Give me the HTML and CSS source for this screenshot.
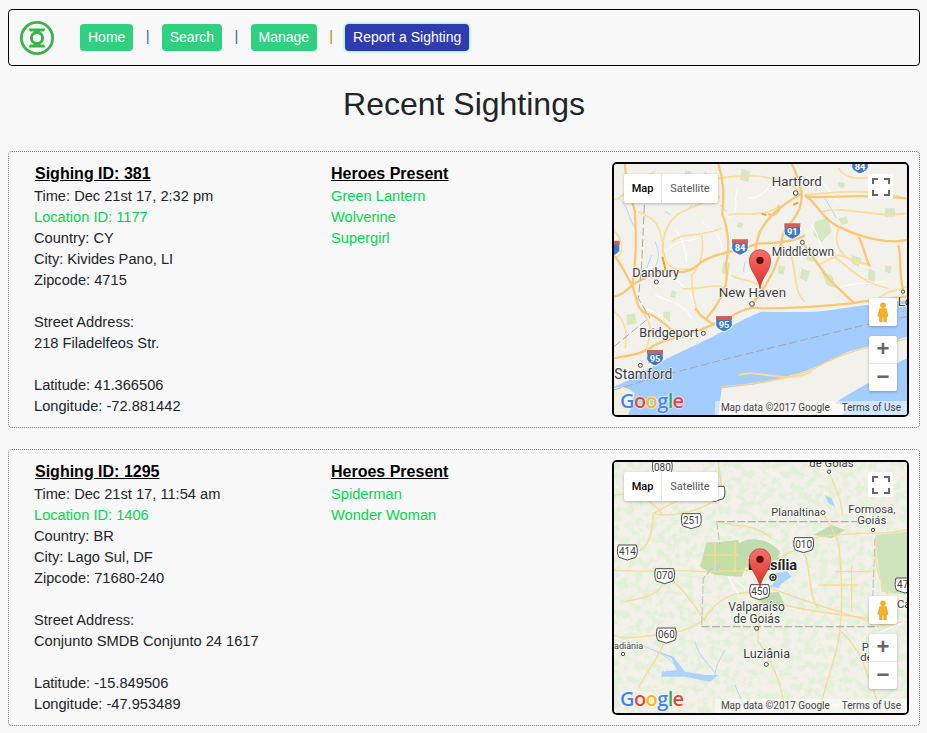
FILE: index.html
```html
<!DOCTYPE html>
<html lang="en">
<head>
<meta charset="utf-8">
<title>Recent Sightings</title>
<link rel="stylesheet" href="styles.css">
</head>
<body>
<svg class="defs" width="0" height="0" aria-hidden="true">
  <defs>
    <filter id="mottle" x="0" y="0" width="100%" height="100%">
      <feTurbulence type="fractalNoise" baseFrequency="0.045" numOctaves="4" seed="11"/>
      <feColorMatrix type="matrix" values="0 0 0 0 0.77  0 0 0 0 0.88  0 0 0 0 0.70  7 0 0 0 -3.300"/>
    </filter>
    <linearGradient id="pinFill" x1="0" y1="0" x2="0" y2="1">
      <stop offset="0" stop-color="#f8716a"/>
      <stop offset="1" stop-color="#d62f28"/>
    </linearGradient>
    <g id="pin">
      <path d="M0 0C-4-34-32-52-32-85a32 32 0 0 1 64 0C32-52 4-34 0 0Z" fill="url(#pinFill)" stroke="#b8352d" stroke-width="2"/>
      <circle cx="0" cy="-85" r="11" fill="#5a0f0c"/>
    </g>
    <g id="ishield">
      <path d="M-24-23H24L25 2C25 14 10 20 0 25C-10 20-25 14-25 2Z" fill="#3f79c5" stroke="#fff" stroke-width="3"/>
      <path d="M-24-23H24V-11H-24Z" fill="#d1605a"/>
    </g>
    <g id="rshield">
      <path d="M-27-21H27C31-8 31 6 25 16L0 24L-25 16C-31 6-31-8-27-21Z" fill="#fff" stroke="#4a4a4a" stroke-width="3"/>
    </g>
  </defs>
</svg>

<nav class="nav">
  <svg class="logo" viewBox="0 0 36 36" aria-label="Green Lantern logo">
    <circle cx="18" cy="18" r="15.6" fill="none" stroke="#38b54a" stroke-width="2.800"/>
    <path d="M9.500 8.500H26.500L25 11.500H21V14H15V11.500H11Z M9.500 27.500H26.500L25 24.500H21V22H15V24.500H11Z" fill="#38b54a"/>
    <circle cx="18" cy="18" r="5.600" fill="none" stroke="#38b54a" stroke-width="3"/>
  </svg>
  <ul class="menu">
    <li><a class="btn" href="#">Home</a></li>
    <li class="sep">|</li>
    <li><a class="btn" href="#">Search</a></li>
    <li class="sep">|</li>
    <li><a class="btn" href="#">Manage</a></li>
    <li class="sep sep-last">|</li>
    <li><a class="btn btn-active" href="#">Report a Sighting</a></li>
  </ul>
</nav>

<h1 class="title">Recent Sightings</h1>

<section class="card">
  <div class="info">
    <h3 class="head">Sighing ID: 381</h3>
    <p>Time: Dec 21st 17, 2:32 pm</p>
    <p><a class="link" href="#">Location ID: 1177</a></p>
    <p>Country: CY</p>
    <p>City: Kivides Pano, LI</p>
    <p>Zipcode: 4715</p>
    <p class="gap">Street Address:</p>
    <p>218 Filadelfeos Str.</p>
    <p class="gap">Latitude: 41.366506</p>
    <p>Longitude: -72.881442</p>
  </div>
  <div class="heroes">
    <h3 class="head">Heroes Present</h3>
    <p><a class="link" href="#">Green Lantern</a></p>
    <p><a class="link" href="#">Wolverine</a></p>
    <p><a class="link" href="#">Supergirl</a></p>
  </div>
  <div class="map">
    <svg class="tiles" viewBox="27 27 879 753" role="img" aria-label="Map of New Haven">
      <rect x="27" y="27" width="879" height="753" fill="#f3f1ec"/>
      <g fill="#d5e8bf">
        <path d="M410 40l25 10-5 30-25-5Z"/><path d="M630 200l40-10 10 40-30 30-25-20Z"/><path d="M700 190l25-5 5 20-20 5Z"/>
        <path d="M650 350l30 10 15 40-30-10Z"/><path d="M590 340l25 10-10 30-20-10Z"/><path d="M355 320l20 5-5 35-20-5Z"/>
        <path d="M790 340l20 10 0 30-20-5Z"/><path d="M65 480l25-5 5 30-30 5Z"/><path d="M175 470l20 0 0 30-20-5Z"/>
        <path d="M200 405l15 5-5 20-15-5Z"/><path d="M420 710l30 0 0 30-30 0Z"/><path d="M130 715l30 0-5 35-25 0Z"/>
        <path d="M240 45l20 5-5 20-15-5Z"/><path d="M740 300l30 10-10 25-20-10Z"/><path d="M840 160l30 0 0 25-30 0Z"/>
        <path d="M700 80l20 5-5 15-15-5Z"/><path d="M520 330l20 5-5 25-15-5Z"/><path d="M610 290l20 10-5 20-20-5Z"/><path d="M840 330l20 5-5 20-15-5Z"/><path d="M400 200l15 5-5 15-15-5Z"/>
      </g>
      <path class="creek" d="M150 260c15 30 15 60-10 90M140 300l-15 40M345 150l20 20M250 160l12-10M180 170l15 8M660 130l35 60M300 50l30 70M40 130c30 20 30 60 50 90M420 320l-5 30M590 60l20 30"/>
      <g class="road-white">
        <path d="M210 220C230 250 240 270 245 320M290 200C330 230 350 240 350 290M180 290C220 250 250 260 280 250M200 360C240 400 270 420 270 460M420 360C470 340 440 300 410 280M620 210C650 250 640 300 690 320M700 400C740 380 780 390 840 380M640 60C660 90 690 130 700 140M430 130C470 130 490 100 510 70M150 420C190 440 230 440 260 490M90 440C120 470 180 470 200 520M400 100C380 130 410 170 370 190"/>
      </g>
      <path fill="#a3ccff" d="M27 780V695C70 680 110 650 160 625C220 590 300 560 350 530C400 500 440 480 470 470C540 470 610 475 680 465C730 458 770 450 850 445L906 435V780Z"/>
      <path fill="#f3f1ec" d="M340 780L350 700C420 690 480 690 560 660C640 640 680 610 730 590C800 570 860 560 906 545V610C860 630 790 680 750 725C730 745 720 780 700 780Z"/>
      <path fill="#a3ccff" d="M690 745C730 715 800 680 906 620V650C860 680 800 720 740 750Z"/>
      <path fill="#fbf3d8" opacity=".9" d="M27 700C50 690 70 700 90 715L70 780H27Z"/>
      <g class="road-minor">
        <path d="M100 170C150 190 170 210 175 290C185 340 200 350 270 340"/>
        <path d="M290 240C300 300 280 340 260 360C260 420 270 460 290 490"/>
        <path d="M370 180C420 170 470 190 520 155"/>
        <path d="M640 330L700 300L790 330"/>
        <path d="M340 70C420 60 500 50 590 110"/>
        <path d="M650 170C720 150 800 190 906 175"/>
        <path d="M600 120C700 110 780 100 906 130"/>
        <path d="M380 360C400 380 450 370 470 400"/>
        <path d="M550 280C580 340 560 410 600 440"/>
        <path d="M810 440C850 400 880 410 906 395"/>
        <path d="M200 260C230 230 280 250 350 220"/>
        <path d="M120 590C150 520 130 490 110 470"/>
        <path d="M60 580C70 530 60 500 30 470"/>
        <path d="M400 660C460 640 540 690 620 650"/>
        <path d="M30 135C70 120 90 70 150 50"/>
        <path d="M700 40C720 70 760 80 830 60"/>
        <path d="M175 300C170 250 180 200 230 170C290 150 310 130 345 125"/>
        <path d="M30 230C50 250 60 300 30 310"/>
        <path d="M230 400C280 410 320 380 360 400"/>
        <path d="M680 300C740 340 760 380 850 400"/>
        <path d="M700 220C680 280 720 320 790 330"/>
      </g>
      <g class="road-major">
        <path d="M27 610C70 600 110 600 150 570C210 540 270 540 340 500C400 480 420 450 470 460C560 460 640 455 740 445C800 435 850 430 906 425"/>
        <path d="M440 450C470 410 500 370 520 310C530 260 530 220 560 200C590 160 590 140 590 110C580 80 575 50 560 27"/>
        <path d="M27 300C50 330 70 370 80 390C120 370 150 350 180 345C230 360 260 350 290 320C340 290 400 290 460 265C510 265 570 260 600 240"/>
        <path d="M590 115C540 145 490 180 465 230C455 260 450 290 450 300"/>
        <path d="M600 120C640 150 650 190 700 215C750 240 840 270 906 255"/>
        <path d="M340 27C360 90 355 130 352 180C370 220 375 280 362 330C375 380 350 440 300 495"/>
        <path d="M60 27C60 80 80 130 90 170C90 220 100 280 82 390C60 410 50 420 27 425"/>
        <path d="M590 260C620 300 640 330 670 370C700 400 730 430 750 445"/>
        <path d="M760 245C780 280 780 310 795 335"/>
        <path d="M600 125C680 130 760 115 905 130"/>
        <path d="M270 460C285 480 300 495 330 510"/>
        <path d="M880 270C890 300 880 350 895 410"/>
        <path d="M520 150C530 170 500 190 490 175"/>
        <path d="M82 390C100 440 90 470 140 480C180 500 200 530 220 540"/>
      </g>
      <path class="road-dark" d="M172 305L182 345M470 176L484 180M565 150L580 142"/>
      <path class="road-coast" d="M350 695C430 690 520 680 620 645C680 610 730 590 800 575C850 565 880 560 906 550"/>
      <path class="border" d="M27 705C200 650 450 590 780 510L906 485"/>
      <path class="border" d="M27 575L130 490M118 150L110 330L100 430L135 490"/>
      <g class="town"><circle cx="572" cy="114" r="7"/><circle cx="592" cy="262" r="6"/><circle cx="154" cy="381" r="6"/><circle cx="441" cy="447" r="7"/><circle cx="295" cy="535" r="6"/><circle cx="106" cy="631" r="6"/><circle cx="894" cy="410" r="5"/></g>
      <use href="#ishield" x="765" y="32"/><use href="#ishield" x="562" y="228"/><use href="#ishield" x="405" y="276"/><use href="#ishield" x="357" y="506"/><use href="#ishield" x="150" y="608"/><use href="#ishield" x="20" y="280"/>
      <g class="shield-text"><text x="765" y="46">84</text><text x="562" y="240">91</text><text x="405" y="288">84</text><text x="357" y="518">95</text><text x="150" y="620">95</text></g>
      <g class="label"><text x="500" y="93">Hartford</text><text x="500" y="303" class="s36">Middletown</text><text x="82" y="366" class="s38">Danbury</text><text x="341" y="427">New Haven</text><text x="103" y="546" class="s38">Bridgeport</text><text x="28" y="672" class="s42">Stamford</text><text x="878" y="452">Lo</text></g>
      <use href="#pin" x="465" y="401"/>
    </svg>
    <div class="type-ctl"><span class="type-on">Map</span><span class="type-off">Satellite</span></div>
    <div class="full-ctl"><svg viewBox="0 0 18 18"><path d="M1 6V1H6M12 1H17V6M17 12V17H12M6 17H1V12" fill="none" stroke="#666" stroke-width="2"/></svg></div>
    <div class="peg-ctl"><svg viewBox="0 0 14 24"><circle cx="7" cy="4" r="3.400" fill="#f5b324"/><path d="M3 8H11L13 17H11V24H8V18H6V24H3V17H1Z" fill="#f5b324" stroke="#c98a14" stroke-width=".6"/></svg></div>
    <div class="zoom-ctl"><span class="zoom-btn">+</span><span class="zoom-btn">−</span></div>
    <span class="google"><b class="g-b">G</b><b class="g-r">o</b><b class="g-y">o</b><b class="g-b">g</b><b class="g-g">l</b><b class="g-r">e</b></span>
    <div class="attrib"><span class="attr-item">Map data ©2017 Google</span><span class="attr-item">Terms of Use</span></div>
  </div>
</section>

<section class="card">
  <div class="info">
    <h3 class="head">Sighing ID: 1295</h3>
    <p>Time: Dec 21st 17, 11:54 am</p>
    <p><a class="link" href="#">Location ID: 1406</a></p>
    <p>Country: BR</p>
    <p>City: Lago Sul, DF</p>
    <p>Zipcode: 71680-240</p>
    <p class="gap">Street Address:</p>
    <p>Conjunto SMDB Conjunto 24 1617</p>
    <p class="gap">Latitude: -15.849506</p>
    <p>Longitude: -47.953489</p>
  </div>
  <div class="heroes">
    <h3 class="head">Heroes Present</h3>
    <p><a class="link" href="#">Spiderman</a></p>
    <p><a class="link" href="#">Wonder Woman</a></p>
  </div>
  <div class="map">
    <svg class="tiles" viewBox="27 21 879 753" role="img" aria-label="Map of Brasília">
      <rect x="27" y="21" width="879" height="753" fill="#f2f0e8"/>
      <rect x="27" y="21" width="879" height="753" filter="url(#mottle)"/>
      <path fill="#c3dfa5" d="M285 335L305 262L340 262L400 255L410 300L420 340L410 365L330 360Z"/>
      <path fill="#bfdcb0" d="M395 270C430 240 490 250 525 290L520 315L480 320L420 340Z"/>
      <path fill="#bfdcb0" d="M625 240L680 210L720 225L680 250Z"/>
      <path fill="#bfdcb0" d="M440 420L520 410L540 450L480 450Z"/>
      <path fill="#cfe3bc" d="M810 240L906 230V420L830 410Z"/>
      <g class="wet">
        <path d="M495 395L520 370L512 355L545 348L560 365L530 385L520 400Z"/>
        <path d="M322 340L345 335L330 356Z"/>
        <path d="M170 650L215 645L200 610L130 578L205 605L240 650L300 660L340 660L315 680L240 665L170 665Z"/>
        <path d="M660 120L680 130L690 155L670 145Z"/>
      </g>
      <path class="creek" d="M270 560C280 610 330 640 330 660M360 585C340 620 330 640 330 660M390 690L420 760M120 575C160 590 200 610 215 640"/>
      <g class="road-y">
        <path d="M27 345C100 355 170 340 300 350C350 345 400 350 440 345"/>
        <path d="M145 175C200 190 280 170 340 130C360 80 340 60 340 21"/>
        <path d="M60 291C130 300 140 250 145 175L230 130"/>
        <path d="M180 360C180 420 110 430 60 440"/>
        <path d="M464 410C400 410 340 420 300 490C270 520 220 530 184 540"/>
        <path d="M184 540C170 600 130 640 100 700"/>
        <path d="M464 410C470 480 455 520 460 560C500 620 530 680 540 774"/>
        <path d="M520 310C560 290 600 270 640 245L760 235C820 235 860 235 906 225"/>
        <path d="M654 173C680 220 690 240 700 260C710 340 720 500 690 600L640 774"/>
        <path d="M672 50C690 100 710 130 712 180"/>
        <path d="M500 400C600 440 700 470 830 510L906 500"/>
        <path d="M540 450C620 470 700 480 800 490"/>
        <path d="M700 520C740 560 770 600 780 640C800 690 810 720 830 774"/>
        <path d="M27 120C80 110 140 130 170 175"/>
        <path d="M340 200C400 220 440 200 500 250"/>
        <path d="M600 300C620 360 610 420 640 460M740 330V470M690 350H800M640 390H760M330 260V355M390 262V350M300 300H400"/>
        <path d="M820 250C800 300 820 380 850 420"/>
        <path d="M27 540C60 560 100 540 184 540M180 360C240 400 280 470 300 500"/>
      </g>
      <path class="dash" d="M335 200H800M290 515H820"/>
      <path class="dash dash-faint" d="M335 200L345 270M290 510L295 370L320 340M810 250L800 510"/>
      <path class="whiteroad" d="M370 365L400 420M390 375L420 400M830 530L900 500"/>
      <g class="town"><circle cx="672" cy="50" r="5"/><circle cx="654" cy="173" r="6"/><circle cx="804" cy="225" r="5"/><circle cx="455" cy="520" r="6"/><circle cx="484" cy="628" r="6"/><circle cx="54" cy="597" r="5"/></g>
      <g><use href="#rshield" x="172" y="38"/><use href="#rshield" x="259" y="197"/><use href="#rshield" x="67" y="291"/><use href="#rshield" x="179" y="362"/><use href="#rshield" x="184" y="540"/><use href="#rshield" x="596" y="269"/><use href="#rshield" x="464" y="410"/><use href="#rshield" x="900" y="390"/><use href="#rshield" x="330" y="115"/></g>
      <g class="shield-num"><text x="172" y="48">080</text><text x="259" y="207">251</text><text x="67" y="301">414</text><text x="179" y="372">070</text><text x="184" y="550">060</text><text x="596" y="279">010</text><text x="464" y="420">450</text><text x="893" y="400">47</text></g>
      <g class="label"><text x="613" y="37" class="s34">de Goiás</text><text x="499" y="184" class="small">Planaltina</text><text x="730" y="174" class="s34">Formosa,</text><text x="757" y="208" class="s34">Goiás</text><text x="370" y="468" class="s36">Valparaíso</text><text x="385" y="503" class="s36">de Goiás</text><text x="415" y="609" class="s38">Luziânia</text><text x="27" y="583" class="tiny">adiânia</text><text x="770" y="588" class="s34">P</text><text x="766" y="618" class="s34">de</text><text x="876" y="458" class="s34">Ca</text></g>
      <text x="428" y="344" class="capital">Brasília</text>
      <circle cx="504" cy="367" r="9" fill="#fff" stroke="#222" stroke-width="4"/><circle cx="504" cy="367" r="4" fill="#222"/>
      <use href="#pin" x="465" y="398"/>
    </svg>
    <div class="type-ctl"><span class="type-on">Map</span><span class="type-off">Satellite</span></div>
    <div class="full-ctl"><svg viewBox="0 0 18 18"><path d="M1 6V1H6M12 1H17V6M17 12V17H12M6 17H1V12" fill="none" stroke="#666" stroke-width="2"/></svg></div>
    <div class="peg-ctl"><svg viewBox="0 0 14 24"><circle cx="7" cy="4" r="3.400" fill="#f5b324"/><path d="M3 8H11L13 17H11V24H8V18H6V24H3V17H1Z" fill="#f5b324" stroke="#c98a14" stroke-width=".6"/></svg></div>
    <div class="zoom-ctl"><span class="zoom-btn">+</span><span class="zoom-btn">−</span></div>
    <span class="google"><b class="g-b">G</b><b class="g-r">o</b><b class="g-y">o</b><b class="g-b">g</b><b class="g-g">l</b><b class="g-r">e</b></span>
    <div class="attrib"><span class="attr-item">Map data ©2017 Google</span><span class="attr-item">Terms of Use</span></div>
  </div>
</section>
</body>
</html>
```
FILE: styles.css
```css
* { box-sizing: border-box; }
html, body { margin: 0; padding: 0; }
body {
  padding: 9px 7px 7px 8px;
  background: #f8f8f8;
  color: #212529;
  font-family: "Liberation Sans", Arial, sans-serif;
  font-size: 14.65px;
  line-height: 21px;
}
.defs { position: absolute; }

.nav {
  display: flex;
  align-items: center;
  height: 57px;
  padding-left: 10px;
  border: 1px solid #000;
  border-radius: 4px;
}
.logo { width: 36px; height: 36px; flex: none; }
.menu {
  display: flex;
  align-items: center;
  margin: 0 0 0 25px;
  padding: 0;
  list-style: none;
}
.btn {
  display: block;
  height: 27px;
  padding: 0 8px;
  border-radius: 4px;
  background: #2fd180;
  color: #fff;
  font-size: 14px;
  line-height: 27px;
  text-decoration: none;
}
.btn-active {
  background: #2f3cb0;
  box-shadow: 0 0 3px 1px #8ff0d8;
}
.sep {
  width: 28.4px;
  margin-top: -3px;
  color: #2a6fa8;
  text-align: center;
}
.sep-last { width: 28px; color: #c87a2a; }

.title {
  margin: 19px 0 28px;
  font-size: 32px;
  font-weight: 400;
  line-height: 38px;
  text-align: center;
}

.card {
  display: flex;
  margin-bottom: 21px;
  padding: 10px 10px 10px 25px;
  border: 1px dotted #777;
  border-radius: 4px;
}
.info { width: 297px; flex: none; }
.heroes { width: 281px; flex: none; }
.head {
  margin: 0 0 0 1px;
  color: #000;
  font-size: 16px;
  font-weight: 700;
  line-height: 24px;
  text-decoration: underline;
}
.heroes .head { margin-left: 0; }
.info p, .heroes p { margin: 0; }
.info .gap { margin-top: 21px; }
.link { color: #05d54f; text-decoration: none; }

.map {
  position: relative;
  width: 297px;
  height: 255px;
  flex: none;
  overflow: hidden;
  border: 2px solid #000;
  border-radius: 5px;
}
.tiles { display: block; width: 293px; height: 251px; }

.road-major path { fill: none; stroke: #fac873; stroke-width: 7; stroke-linejoin: round; }
.road-minor path { fill: none; stroke: #fbdc98; stroke-width: 5; }
.road-white path { fill: none; stroke: #fff; stroke-width: 3; }
.road-dark { fill: none; stroke: #f0a030; stroke-width: 6; }
.road-coast { fill: none; stroke: #fbd48c; stroke-width: 4; }
.road-y path { fill: none; stroke: #f4dd96; stroke-width: 4; }
.whiteroad { fill: none; stroke: #fff; stroke-width: 3; }
.creek { fill: none; stroke: #b5d6fb; stroke-width: 3; }
.wet { fill: #abd3fb; }
.border { fill: none; stroke: #a8a6a2; stroke-width: 3; stroke-dasharray: 24 10; }
.dash { fill: none; stroke: #b1b0ab; stroke-width: 3.500; stroke-dasharray: 24 7; }
.dash-faint { stroke: #c6c5c0; }
.town circle { fill: #fff; stroke: #444; stroke-width: 3; }

.label text, .capital {
  fill: #3a3a3a;
  font-family: Roboto, "Liberation Sans", sans-serif;
  font-size: 40px;
  paint-order: stroke;
  stroke: #fff;
  stroke-width: 4;
  stroke-linejoin: round;
}
.label .s34 { font-size: 34px; }
.label .s36 { font-size: 36px; }
.label .s38 { font-size: 38px; }
.label .s42 { font-size: 42px; }
.label .small { font-size: 33px; }
.label .tiny { font-size: 27px; }
.capital { fill: #222; font-size: 44px; font-weight: 700; }
.shield-text text {
  fill: #fff;
  font-family: Roboto, "Liberation Sans", sans-serif;
  font-size: 28px;
  font-weight: 700;
  text-anchor: middle;
}
.shield-num text {
  fill: #3a3a3a;
  font-family: Roboto, "Liberation Sans", sans-serif;
  font-size: 30px;
  text-anchor: middle;
}

.type-ctl {
  position: absolute;
  top: 10px;
  left: 10px;
  display: flex;
  width: 94px;
  height: 29px;
  border-radius: 2px;
  background: #fff;
  box-shadow: 0 1px 3px rgba(0, 0, 0, .25);
  font-family: Roboto, "Liberation Sans", sans-serif;
  font-size: 11px;
  line-height: 29px;
  text-align: center;
}
.type-on { width: 38px; border-right: 1px solid #e6e6e6; color: #000; font-weight: 500; }
.type-off { flex: 1; color: #565656; }
.full-ctl {
  position: absolute;
  top: 10px;
  left: 254px;
  display: flex;
  align-items: center;
  justify-content: center;
  width: 25px;
  height: 25px;
  border-radius: 2px;
  background: #fff;
}
.full-ctl svg { width: 18px; height: 18px; }
.peg-ctl {
  position: absolute;
  top: 134px;
  left: 255px;
  display: flex;
  align-items: center;
  justify-content: center;
  width: 28px;
  height: 28px;
  border-radius: 2px;
  background: #fff;
  box-shadow: 0 1px 3px rgba(0, 0, 0, .25);
}
.peg-ctl svg { width: 12px; height: 20px; }
.zoom-ctl {
  position: absolute;
  top: 172px;
  left: 255px;
  display: flex;
  flex-direction: column;
  width: 28px;
  height: 55px;
  border-radius: 2px;
  background: #fff;
  box-shadow: 0 1px 3px rgba(0, 0, 0, .25);
}
.zoom-btn {
  flex: 1;
  color: #666;
  font-family: "Liberation Sans", sans-serif;
  font-size: 22px;
  font-weight: 700;
  line-height: 26px;
  text-align: center;
}
.zoom-btn + .zoom-btn { border-top: 1px solid #e6e6e6; }
.google {
  position: absolute;
  left: 6px;
  bottom: 2px;
  font-family: "Open Sans", "Liberation Sans", sans-serif;
  font-size: 20px;
  letter-spacing: -.6px;
  line-height: 24px;
  text-shadow: 0 0 2px #fff, 0 0 2px #fff;
}
.google b { font-weight: 600; }
.g-b { color: #4285f4; }
.g-r { color: #ea4335; }
.g-y { color: #fbbc05; }
.g-g { color: #34a853; }
.attrib {
  position: absolute;
  right: 0;
  bottom: 0;
  display: flex;
  height: 14px;
  background: rgba(255, 255, 255, .5);
  color: #444;
  font-family: Roboto, "Liberation Sans", sans-serif;
  font-size: 10px;
  line-height: 14px;
}
.attr-item { padding: 0 6px; }
```
